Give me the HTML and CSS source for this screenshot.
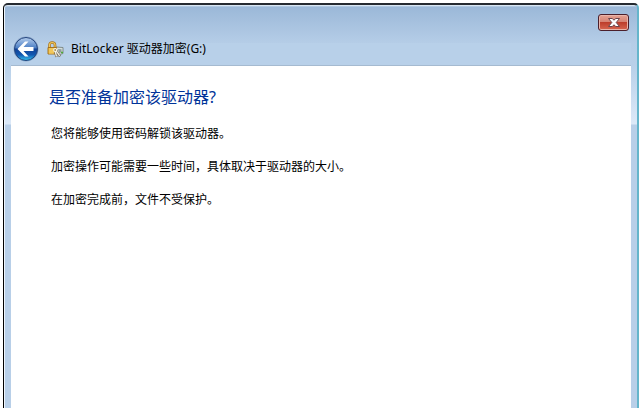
FILE: index.html
```html
<!DOCTYPE html>
<html lang="zh-CN">
<head>
    <meta charset="UTF-8">
    <meta name="viewport" content="width=device-width, initial-scale=1.0">
    <title>BitLocker 驱动器加密(G:)</title>
    <link rel="stylesheet" href="styles.css">
</head>
<body>
    <div class="window">
        <header class="title-bar">
            <div class="caption-buttons">
                <button type="button" class="close-btn" aria-label="关闭">
                    <svg width="14" height="11" viewBox="0 0 14 11">
                        <path d="M1.500 1.500h3.700L7 3.200l1.800-1.700h3.700L9.200 5.500l3.300 4H8.800L7 7.800 5.200 9.500H1.500l3.300-4z" fill="#fff" stroke="#6b454c" stroke-width="1"/>
                    </svg>
                </button>
            </div>
            <div class="nav-row">
                <button type="button" class="back-btn" aria-label="返回">
                    <svg width="26" height="26" viewBox="0 0 26 26">
                        <defs>
                            <linearGradient id="ball" x1="0" y1="0" x2="0" y2="1">
                                <stop offset="0" stop-color="#b5cdec"/>
                                <stop offset="0.45" stop-color="#4d7fc5"/>
                                <stop offset="0.5" stop-color="#124195"/>
                                <stop offset="0.75" stop-color="#1258b1"/>
                                <stop offset="1" stop-color="#35c4ef"/>
                            </linearGradient>
                        </defs>
                        <circle cx="13" cy="13" r="12.500" fill="#8fa9cb"/>
                        <circle cx="13" cy="13" r="11.500" fill="url(#ball)" stroke="#24457e"/>
                        <path d="M4.500 13l7.500-7.500h3.500l-5 5.500H20.500v4h-10l5 5.500H12z" fill="#fff"/>
                    </svg>
                </button>
                <svg class="app-icon" width="17" height="17" viewBox="0 0 17 17">
                    <path d="M2.500 7.500V4Q2.500 1.500 5.200 1.500T8 4v3.500" fill="none" stroke="#a8731d" stroke-width="2.600"/>
                    <path d="M2.500 7.500V4Q2.500 1.500 5.200 1.500T8 4v3.500" fill="none" stroke="#f0c75a" stroke-width="1.200"/>
                    <path d="M9 6l7 .5v6L11 14z" fill="#d5dedc" stroke="#6f7873" stroke-width="0.800"/>
                    <path d="M11 8l3.500.3v3L12 12z" fill="#8f9d9b"/>
                    <path d="M14 11.500h2" stroke="#4bab3a" stroke-width="1.500"/>
                    <path d="M1 6.500h8.500V13H1z" fill="#e9b232" stroke="#a06b15" stroke-width="0.900"/>
                    <path d="M1.800 8h6.700M1.800 10h6M1.800 12h5" stroke="#fbe08a" stroke-width="0.900"/>
                    <path d="M8 9.500l1.500 6.500M9 9.500l4 6" fill="none" stroke="#746b59" stroke-width="2.400"/>
                    <path d="M8 9.500l1.500 6M9 9.500l3.700 5.300" fill="none" stroke="#f3efe4" stroke-width="1.300"/>
                    <circle cx="8.200" cy="9" r="1.500" fill="#a28b52" stroke="#f8f6e8" stroke-width="1.100"/>
                </svg>
                <span class="title">BitLocker 驱动器加密(G:)</span>
            </div>
        </header>

        <main class="content">
            <h1>是否准备加密该驱动器?</h1>
            <p>您将能够使用密码解锁该驱动器。</p>
            <p>加密操作可能需要一些时间，具体取决于驱动器的大小。</p>
            <p>在加密完成前，文件不受保护。</p>
        </main>
    </div>
</body>
</html>
```

FILE: styles.css
```css
* {
    margin: 0;
    padding: 0;
    box-sizing: border-box;
}

body {
    display: flex;
    min-height: 100vh;
    padding: 3px 2px 8px 3px;
    background: #fff;
    font-family: "Noto Sans", "Noto Sans CJK SC", sans-serif;
    font-size: 12px;
    color: #000;
}

.window {
    flex: 1;
    display: flex;
    flex-direction: column;
    padding: 0 6px 0 7px;
    border-top: 2px solid #252a30;
    border-left: 1px solid #000;
    border-right: 2px solid #65b5cb;
    border-radius: 5px 5px 0 0;
    /* glass frame, lighter down to the reflection edge */
    background: linear-gradient(#eef5fc 0, #9bb8d8 2px, #b5cde7 38px, #b8d0e9 60px, #dce9f8 119px, #b8cfe8 120px);
    box-shadow: inset 1px 0 #eef5fc;
}

.title-bar {
    height: 61px;
    border-bottom: 1px solid #a5bad0;
    background: linear-gradient(transparent 38px, #b8d0e9 38px);
}

.caption-buttons {
    display: flex;
    justify-content: flex-end;
    padding: 9px 2px 0 0;
}

.close-btn {
    display: flex;
    align-items: center;
    justify-content: center;
    width: 31px;
    height: 17px;
    border: 1px solid #4b1f2b;
    border-radius: 3px;
    background: linear-gradient(#e5a293, #d48172 48%, #bd3e2c 50%, #d76751);
    box-shadow: inset 0 0 0 1px #e9b5aa;
}

.nav-row {
    display: flex;
    align-items: center;
    padding: 5px 0 0 2px;
}

.back-btn {
    width: 26px;
    height: 26px;
    border: none;
    background: none;
}

.back-btn svg {
    display: block;
}

.app-icon {
    margin: 0 7px 0 8px;
}

.title {
    line-height: 20px;
}

.content {
    flex: 1;
    padding: 20px 40px;
    background: #fff;
}

h1 {
    margin: 0 0 17px -2px;
    font-size: 16px;
    font-weight: normal;
    line-height: 22px;
    color: #003399;
}

p {
    margin-bottom: 15px;
    line-height: 18px;
}
```
